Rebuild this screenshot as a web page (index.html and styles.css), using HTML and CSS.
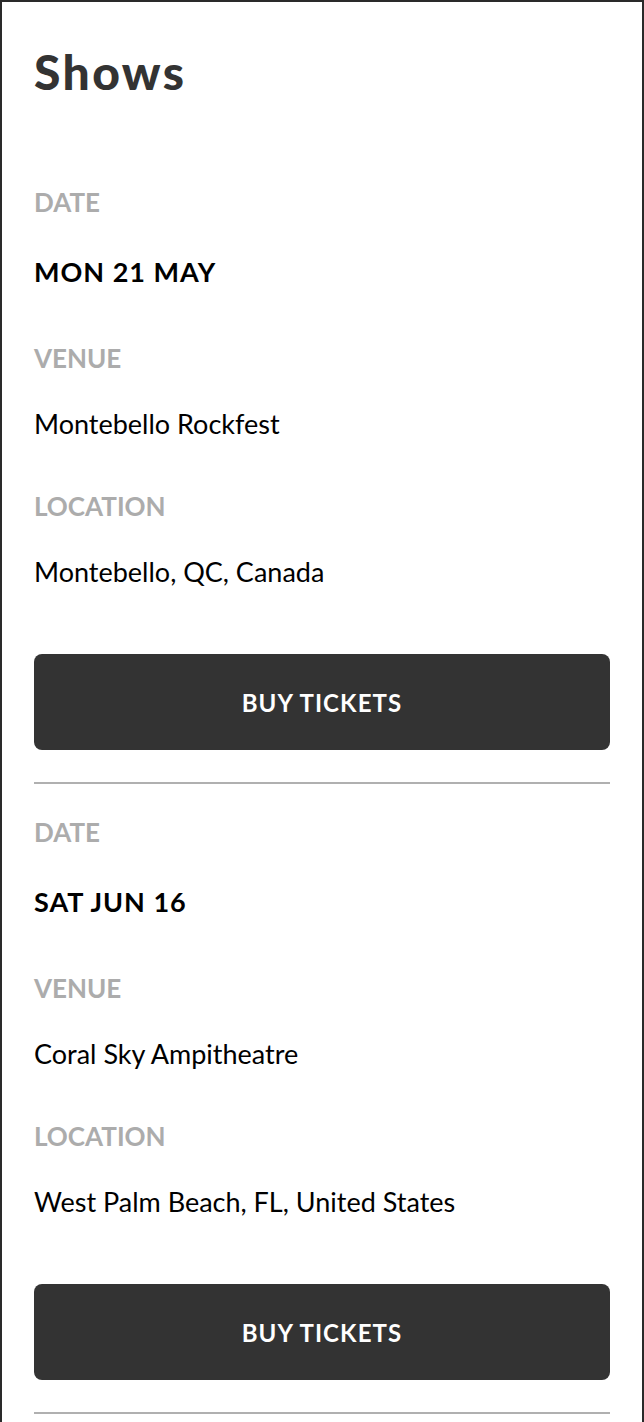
FILE: index.html
```html
<!DOCTYPE html>
<html lang="en">
<head>
<meta charset="utf-8">
<title>Shows</title>
<link rel="stylesheet" href="styles.css">
</head>
<body>
<main class="page">
  <h1 class="title">Shows</h1>
  <section class="show">
    <div class="label">DATE</div>
    <div class="value value-date">MON 21 MAY</div>
    <div class="label">VENUE</div>
    <div class="value">Montebello Rockfest</div>
    <div class="label">LOCATION</div>
    <div class="value">Montebello, QC, Canada</div>
    <button class="buy">BUY TICKETS</button>
  </section>
  <section class="show">
    <div class="label">DATE</div>
    <div class="value value-date">SAT JUN 16</div>
    <div class="label">VENUE</div>
    <div class="value">Coral Sky Ampitheatre</div>
    <div class="label">LOCATION</div>
    <div class="value">West Palm Beach, FL, United States</div>
    <button class="buy">BUY TICKETS</button>
  </section>
</main>
</body>
</html>
```

FILE: styles.css
```css
html, body {
  margin: 0;
  padding: 0;
  background: #fff;
}

.page {
  box-sizing: border-box;
  min-height: 1500px;
  border: 2px solid #2a2a2a;
  border-bottom: none;
  padding: 0 32px;
  font-family: Lato, "Open Sans", sans-serif;
}

.title {
  margin: 42px 0 0;
  font-size: 48px;
  line-height: 56px;
  font-weight: 900;
  letter-spacing: 2.4px;
  color: #333;
}

.show {
  display: flex;
  flex-direction: column;
  padding-top: 82px;
  border-bottom: 2px solid #b0b0b0;
}

.show + .show {
  padding-top: 28px;
}

.label {
  font-size: 26px;
  line-height: 40px;
  font-weight: 700;
  color: #acacac;
  margin-bottom: 26px;
}

.value {
  font-size: 27px;
  line-height: 40px;
  font-weight: 400;
  color: #000;
  margin-bottom: 42px;
}

.value-date {
  font-weight: 700;
  line-height: 48px;
  letter-spacing: 1px;
}

.buy {
  margin: 20px 0 32px;
  height: 96px;
  border: none;
  border-radius: 8px;
  background: #333;
  color: #fff;
  font-family: inherit;
  font-size: 24px;
  font-weight: 700;
  letter-spacing: 1.1px;
  padding: 0;
}
```
